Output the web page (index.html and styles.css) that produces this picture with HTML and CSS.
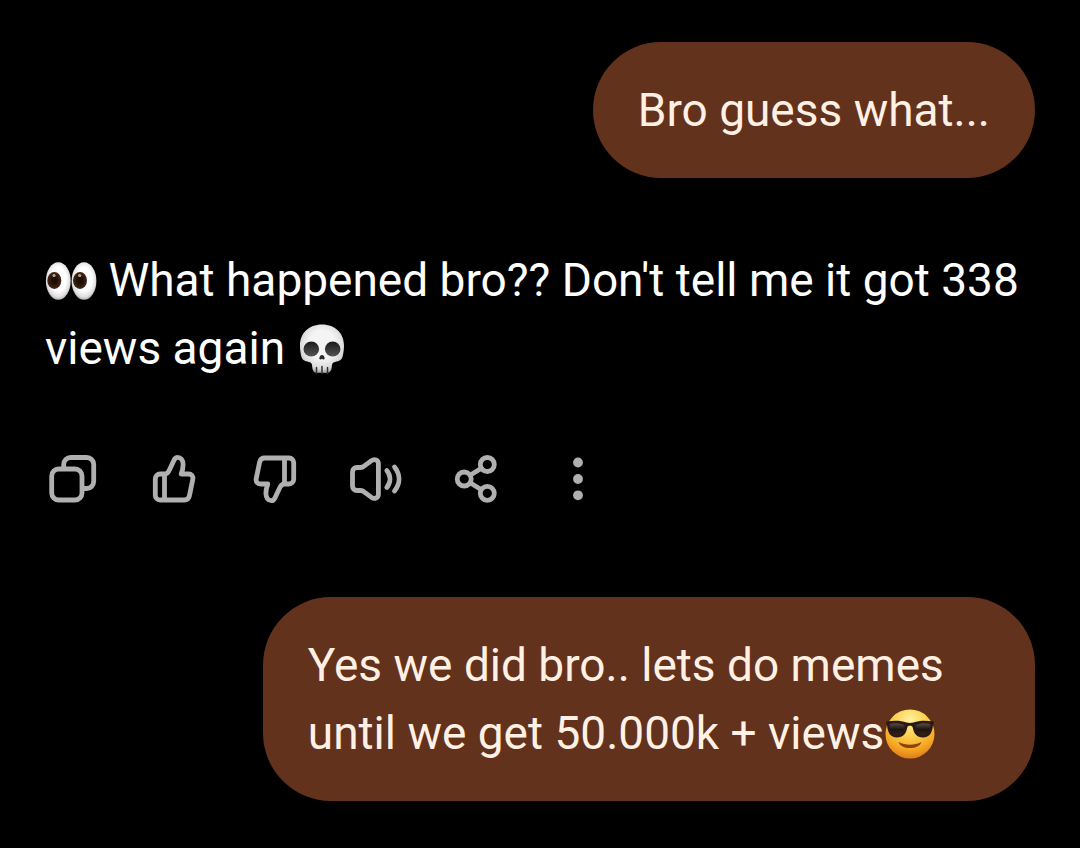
FILE: index.html
```html
<!DOCTYPE html>
<html lang="en">
  <head>
    <meta charset="UTF-8" />
    <meta name="viewport" content="width=device-width, initial-scale=1" />
    <title>Chat</title>
    <link rel="stylesheet" href="styles.css">
  </head>

  <body>
    <main class="chat">
      <p class="bubble">Bro guess what...</p>

      <article class="reply">
        <p class="reply-text">
          <svg class="emoji" viewBox="0 0 52 52" role="img" aria-label="eyes">
            <defs>
              <radialGradient id="eyewhite" cx="50%" cy="45%" r="58%">
                <stop offset="0.55" stop-color="#ffffff" />
                <stop offset="0.82" stop-color="#dedede" />
                <stop offset="1" stop-color="#a0a0a0" />
              </radialGradient>
              <radialGradient id="iris">
                <stop offset="0.3" stop-color="#1c0d05" />
                <stop offset="1" stop-color="#432616" />
              </radialGradient>
            </defs>
            <ellipse cx="13.3" cy="26" rx="12.4" ry="18.8" fill="url(#eyewhite)" />
            <ellipse cx="39" cy="26" rx="12.4" ry="18.8" fill="url(#eyewhite)" />
            <ellipse cx="9.3" cy="25.5" rx="7" ry="8.4" fill="url(#iris)" />
            <ellipse cx="35" cy="25.5" rx="7" ry="8.4" fill="url(#iris)" />
            <circle cx="9" cy="20.5" r="1.6" fill="#b9a699" />
            <circle cx="34.7" cy="20.5" r="1.6" fill="#b9a699" />
          </svg>
          What happened bro?? Don't tell me it got 338 views again
          <svg class="emoji" viewBox="0 0 52 52" role="img" aria-label="skull">
            <defs>
              <radialGradient id="bone" cx="50%" cy="42%" r="60%">
                <stop offset="0.5" stop-color="#f4f4f4" />
                <stop offset="0.82" stop-color="#dadada" />
                <stop offset="1" stop-color="#9c9c9c" />
              </radialGradient>
              <linearGradient id="socket" x1="0" y1="0" x2="0" y2="1">
                <stop offset="0" stop-color="#191919" />
                <stop offset="1" stop-color="#555555" />
              </linearGradient>
            </defs>
            <path d="M26 1.5C12.5 1.5 4 10.500 4 22.500c0 4.500.6 7.500 1.200 10.500.8 4 3.600 5 7.800 6 2.600.6 3 2 3.200 4.500.2 3.500 1.400 6 4.300 6.300h11c2.900-.3 4.100-2.800 4.300-6.300.2-2.500.6-3.900 3.200-4.500 4.200-1 7-2 7.800-6 .6-3 1.200-6 1.200-10.500C48 10.500 39.500 1.500 26 1.500z" fill="url(#bone)" />
            <ellipse cx="15.300" cy="26" rx="7.800" ry="7.600" fill="url(#socket)" />
            <ellipse cx="36.700" cy="26" rx="7.800" ry="7.600" fill="url(#socket)" />
            <path d="M26 32c-1.500 0-2.900 2.200-2.700 3.500.2 1.200 1.900 1.200 2.700.2.8 1 2.500 1 2.700-.2.2-1.300-1.200-3.500-2.700-3.500z" fill="#292929" />
            <path d="M20.500 44.500v6M26 43.500v7M31.500 44.500v6" stroke="#333333" stroke-width="1.500" stroke-linecap="round" />
          </svg>
        </p>

        <div class="actions">
          <button type="button" class="action" aria-label="Copy">
            <svg class="icon" viewBox="0 0 60 60">
              <rect x="8.700" y="20" width="30.300" height="31" rx="7" />
              <path d="M20.700 19v-3.500a7 7 0 0 1 7-7h16a7 7 0 0 1 7 7v17a7 7 0 0 1-7 7H40" />
            </svg>
          </button>
          <button type="button" class="action" aria-label="Good response">
            <svg class="icon" viewBox="0 0 60 60">
              <path d="M20.500 25H16a4.700 4.700 0 0 0-4.700 4.700v16.600A4.700 4.700 0 0 0 16 51h24.500c2.600 0 4.200-1.500 4.800-3.800l3.500-16.900c.6-3-1.300-5.300-4.300-5.300h-7.300c1.200-3.300 1.900-6.300 1.900-9.300 0-4.500-2.400-7.400-5.600-7.400-1.700 0-2.500.9-3.200 2.300L25 21.700c-1 2.100-2.200 3.300-4.500 3.300zV51" />
            </svg>
          </button>
          <button type="button" class="action" aria-label="Bad response">
            <svg class="icon" viewBox="0 0 60 60">
              <path transform="rotate(180 30 30)" d="M20.500 25H16a4.700 4.700 0 0 0-4.700 4.700v16.600A4.700 4.700 0 0 0 16 51h24.500c2.600 0 4.200-1.500 4.800-3.800l3.500-16.900c.6-3-1.300-5.300-4.300-5.300h-7.300c1.200-3.300 1.900-6.300 1.900-9.300 0-4.500-2.400-7.400-5.600-7.400-1.700 0-2.500.9-3.200 2.300L25 21.700c-1 2.100-2.200 3.300-4.500 3.300zV51" />
            </svg>
          </button>
          <button type="button" class="action" aria-label="Read aloud">
            <svg class="icon" viewBox="0 0 60 60">
              <path d="M11 18.500h3.500c1.500 0 2.500-.4 3.600-1.300l7.400-5.600c3-2.200 6.900-.6 6.900 3.100v30.600c0 3.700-3.900 5.300-6.900 3.100l-7.400-5.600c-1.100-.9-2.100-1.300-3.600-1.300H11c-2.700 0-4.500-1.800-4.500-4.500V23c0-2.700 1.800-4.500 4.500-4.500z" />
              <path d="M40.800 21.500c4.200 5.200 4.200 11.800 0 17M48.500 18c6 7.600 6 16.400 0 24" />
            </svg>
          </button>
          <button type="button" class="action" aria-label="Share">
            <svg class="icon" viewBox="0 0 60 60">
              <circle cx="40.300" cy="15.500" r="7" />
              <circle cx="17.200" cy="30" r="7" />
              <circle cx="40.300" cy="44.300" r="7" />
              <path d="M23.500 26l10.500-6.500M23.500 34L34 40.500" />
            </svg>
          </button>
          <button type="button" class="action" aria-label="More">
            <svg class="icon icon-dots" viewBox="0 0 60 60">
              <circle cx="30" cy="13.500" r="4.900" />
              <circle cx="30" cy="30" r="4.900" />
              <circle cx="30" cy="46.300" r="4.900" />
            </svg>
          </button>
        </div>
      </article>

      <p class="bubble">
        Yes we did bro.. lets do memes until we get 50.000k + views<svg class="emoji" viewBox="0 0 52 52" role="img" aria-label="cool face">
          <defs>
            <radialGradient id="face" cx="50%" cy="22%" r="80%">
              <stop offset="0" stop-color="#fff0a0" />
              <stop offset="0.4" stop-color="#fbd150" />
              <stop offset="0.75" stop-color="#f5a623" />
              <stop offset="1" stop-color="#dd7a16" />
            </radialGradient>
            <linearGradient id="lens" x1="0" y1="0" x2="0" y2="1">
              <stop offset="0" stop-color="#5b4b42" />
              <stop offset="0.5" stop-color="#1d1410" />
              <stop offset="1" stop-color="#33241c" />
            </linearGradient>
          </defs>
          <circle cx="26" cy="26" r="24.500" fill="url(#face)" />
          <path d="M14.500 34c7 3.500 16 3.500 23 0-1.500 4-6 6-11.500 6s-10-2-11.500-6z" fill="#8f420d" />
          <path d="M2.500 13.600c7.500-1.300 14-1.200 20 .9 2.300.6 4.700.6 7 0 6-2.100 12.500-2.200 20-.9.5 1.400.4 2.800-.6 4-.5 7-3.400 12-9.800 12-6.300 0-9.300-4-10.300-9.800-.3-1.500-1.300-2-2.800-2s-2.500.5-2.800 2c-1 5.800-4 9.800-10.300 9.800-6.400 0-9.300-5-9.800-12-1-1.200-1.100-2.600-.6-4z" fill="#291b14" />
          <path d="M5.500 16c5.500-1.200 10.500-.8 15 1-.6 6.500-2.800 10.500-7.600 10.500-4.900 0-7.100-5-7.400-11.500zM46.500 16c-5.500-1.200-10.500-.8-15 1 .6 6.500 2.800 10.500 7.600 10.500 4.900 0 7.100-5 7.400-11.500z" fill="url(#lens)" />
        </svg>
      </p>
    </main>
  </body>
</html>
```

FILE: styles.css
```css
body {
  margin: 0;
  background: #000000;
  color: #ffffff;
  font-family: Roboto, "Liberation Sans", sans-serif;
  font-size: 46px;
  line-height: 68px;
}

p {
  margin: 0;
}

.chat {
  display: flex;
  flex-direction: column;
  gap: 68px;
  padding: 42px 45px;
}

.bubble {
  align-self: flex-end;
  box-sizing: border-box;
  max-width: 78%;
  padding: 34px 45px;
  border-radius: 68px;
  background: #63321c;
  color: #fff0e4;
}

.reply {
  display: flex;
  flex-direction: column;
  gap: 67px;
  padding-bottom: 20px;
}

.emoji {
  width: 52px;
  height: 52px;
  vertical-align: -11px;
}

.actions {
  display: flex;
  gap: 41px;
  margin-left: -2px;
}

.action {
  padding: 0;
  border: none;
  background: none;
  color: #b0b0b0;
  cursor: pointer;
}

.action:hover {
  color: #ffffff;
}

.icon {
  display: block;
  width: 60px;
  height: 60px;
  fill: none;
  stroke: currentColor;
  stroke-width: 4.8;
  stroke-linecap: round;
  stroke-linejoin: round;
}

.icon-dots {
  fill: currentColor;
  stroke: none;
}
```
